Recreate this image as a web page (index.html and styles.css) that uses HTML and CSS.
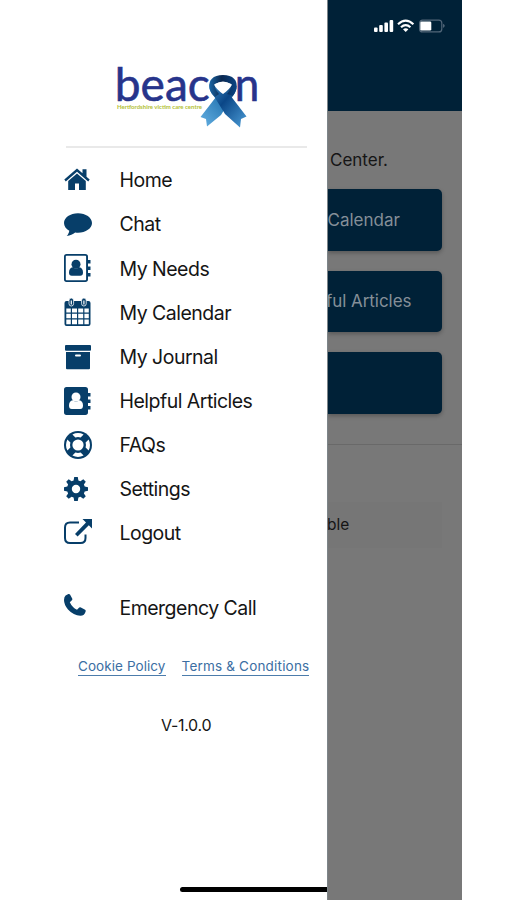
FILE: index.html
```html
<!DOCTYPE html>
<html lang="en">
<head>
<meta charset="utf-8">
<title>Beacon menu</title>
<link rel="stylesheet" href="styles.css">
</head>
<body>
<div class="screen">
  <aside class="drawer">
    <header class="brand">
      <svg class="logo" viewBox="113 63 150 66" role="img" aria-label="beacon">
        <defs>
          <linearGradient id="tailA" x1="1" y1="0" x2="0" y2="1"><stop offset="0" stop-color="#0c3b72"/><stop offset=".45" stop-color="#2f7fba"/><stop offset="1" stop-color="#65b0e2"/></linearGradient>
          <linearGradient id="tailB" x1="0" y1="0" x2="1" y2="1"><stop offset="0" stop-color="#3c8cc6"/><stop offset=".4" stop-color="#0a4687"/><stop offset="1" stop-color="#4d9ed8"/></linearGradient>
          <linearGradient id="loop" x1="0" x2="1"><stop offset="0" stop-color="#1c67a5"/><stop offset=".45" stop-color="#0a2850"/><stop offset="1" stop-color="#0b4585"/></linearGradient>
        </defs>
        <text class="logo-word" x="114.800" y="101.300" textLength="95" lengthAdjust="spacingAndGlyphs">beac</text>
        <text class="logo-word" x="234.700" y="101.300" textLength="24.500" lengthAdjust="spacingAndGlyphs">n</text>
        <text class="logo-tag" x="117" y="109.300" textLength="85" lengthAdjust="spacingAndGlyphs">Hertfordshire victim care centre</text>
        <path fill="url(#tailA)" d="M236.500 86q0 6-5 12L221 115 207 126.500 206 119 200.500 117 216 97 229 86Z"/>
        <path fill="url(#tailB)" d="M209.500 84q-1 7 5 13L225 114 240 127.500 241 119 246.500 116.500 230 95 216 86Z"/>
        <path fill="url(#loop)" d="M209.500 89C208 80 213 75 223 75c10 0 15 5 13.500 14q-1 4-4 7L227 94Q232 88 231 84 223 79 215 84 214 88 219 94L215 97Q210.500 93 209.500 89Z"/>
        <path fill="#fff" d="M214 84.500Q223 79.500 232 84.500 230 89 223 94 216 89 214 84.500Z"/>
      </svg>
    </header>
    <nav class="menu">
      <a class="item"><svg class="icon" viewBox="0 0 28 28"><path d="M13 2.500 0.300 13.600l1.500 1.800L13 5.800l11.200 9.600 1.500-1.800-3.200-2.800V3.300h-4v4Z"/><path d="m13 7.400-8.800 7.500V24H11v-6.500h4V24h6.800v-9.100Z"/></svg><span>Home</span></a>
      <a class="item"><svg class="icon" viewBox="0 0 28 28"><path d="M14 3.200C6.300 3.200 0 7.500 0 13c0 3.200 2.100 6 5.300 7.700-.3 2-1.200 3.800-2.600 5.400 3.400-.5 6.200-2 8.500-3.600 9 1.200 16.800-3.500 16.800-9.500 0-5.500-6.300-9.800-14-9.800Z"/></svg><span>Chat</span></a>
      <a class="item"><svg class="icon" viewBox="0 0 28 28"><path fill-rule="evenodd" d="M2.500 0h18.800q2.700 0 2.700 2.700v22.600q0 2.700-2.700 2.700H2.500Q0 28 0 25.300V2.700Q0 0 2.500 0Zm0 1.800q-.7 0-.7.800v22.800q0 .8.700.8h18.800q.8 0 .8-.8V2.600q0-.8-.8-.8Z"/><path d="M24 6h2.500v3.600H24Zm0 6.500h2.500v3.600H24Zm0 6.500h2.500v3.600H24Z"/><circle cx="12" cy="10.300" r="4.500"/><path d="M8.800 13.300Q5 14 5 18.500q0 3.200 2.800 3.200h8.400q2.800 0 2.800-3.200 0-4.500-3.800-5.200-3.200 2.600-6.400 0Z"/></svg><span>My Needs</span></a>
      <a class="item"><svg class="icon" viewBox="0 0 28 28"><path fill-rule="evenodd" d="M2.500 3h22q2 0 2 2v21q0 2-2 2h-22q-2 0-2-2V5q0-2 2-2ZM2.300 10.600v4h4.500v-4Zm5.700 0v4h5v-4Zm6.200 0v4h5v-4Zm6.200 0v4h4.400v-4ZM2.300 15.800v4.400h4.500v-4.400Zm5.700 0v4.400h5v-4.400Zm6.200 0v4.400h5v-4.400Zm6.200 0v4.400h4.400v-4.400ZM2.300 21.400v4.800h4.500v-4.800Zm5.700 0v4.800h5v-4.800Zm6.200 0v4.800h5v-4.800Zm6.200 0v4.800h4.400v-4.800Z"/><g class="ring"><rect x="5" y="0" width="4.600" height="8" rx="2.300"/><rect x="17.600" y="0" width="4.600" height="8" rx="2.300"/></g><path fill="#fff" d="M6.700 2.500h1.200v4H6.700Zm12.600 0h1.200v4h-1.200Z"/></svg><span>My Calendar</span></a>
      <a class="item"><svg class="icon" viewBox="0 0 28 28"><rect x="1" y="2" width="26" height="5.800" rx="1"/><path fill-rule="evenodd" d="M2 9h24v16.200q0 1-1 1H3q-1 0-1-1Zm10 2.400q-1 0-1 1.100t1 1.100h4q1 0 1-1.100t-1-1.100Z"/></svg><span>My Journal</span></a>
      <a class="item"><svg class="icon" viewBox="0 0 28 28"><path d="M2.500 0h18.800q2.700 0 2.700 2.700v22.600q0 2.700-2.700 2.700H2.500Q0 28 0 25.300V2.700Q0 0 2.500 0ZM24 6h2.500v3.600H24Zm0 6.500h2.500v3.600H24Zm0 6.500h2.500v3.600H24Z"/><g fill="#fff"><circle cx="12" cy="10" r="4.500"/><path d="M8.800 13.300Q5 14 5 18.500q0 3.500 2.800 3.500h8.400q2.800 0 2.800-3.500 0-4.500-3.800-5.200-3.200 2.600-6.400 0Z"/></g></svg><span>Helpful Articles</span></a>
      <a class="item"><svg class="icon" viewBox="0 0 28 28"><circle cx="14" cy="14" r="14"/><g fill="#fff"><circle cx="14" cy="14" r="5.600"/><path d="M8.400 3.400Q14 .6 19.600 3.400L16.600 6.400Q14 5.600 11.400 6.400ZM8.400 24.600Q14 27.400 19.600 24.600L16.600 21.600Q14 22.400 11.400 21.600ZM3.400 8.400Q.6 14 3.400 19.600L6.400 16.600Q5.600 14 6.400 11.400ZM24.600 8.400Q27.400 14 24.600 19.600L21.600 16.600Q22.400 14 21.600 11.400Z"/></g></svg><span>FAQs</span></a>
      <a class="item"><svg class="icon" viewBox="0 0 28 28"><path fill-rule="evenodd" d="M10.200 2h3.600l.6 3.400 2 .8 2.900-2 2.500 2.600-1.900 2.800.8 2 3.300.6v3.600l-3.300.6-.8 2 1.900 2.800-2.500 2.600-2.900-2-2 .8-.6 3.400h-3.600l-.6-3.400-2-.8-2.900 2-2.500-2.600 1.900-2.800-.8-2-3.300-.6v-3.600l3.300-.6.800-2-1.900-2.800 2.500-2.600 2.900 2 2-.8ZM12 9.800a4.200 4.200 0 1 0 0 8.400 4.200 4.200 0 0 0 0-8.400Z"/></svg><span>Settings</span></a>
      <a class="item"><svg class="icon" viewBox="0 0 28 28"><path class="line" d="M15 3.500H6Q1 3.500 1 8.500v10.500q0 5 5 5h10.500q5 0 5-5V15.500"/><path d="M18.500 0H28v9.500l-3.200-3.200L13.600 17.500 11 14.900 22 3.600Z"/></svg><span>Logout</span></a>
      <a class="item emergency"><svg class="icon" viewBox="0 0 28 28"><path d="M1.600 2.600 4.400 1.100q1-.4 1.600.5l2.200 4q.5.900-.3 1.700L5.800 9.200q2.300 5 7.200 7.600l2.200-2.200q.8-.7 1.700-.2l4.200 2.400q.9.500.6 1.500-1.200 4.500-5.300 4.500Q9.500 22.500 4 16.500 0 11.700 0 7 .1 3.700 1.600 2.600Z"/></svg><span>Emergency Call</span></a>
    </nav>
    <div class="legal"><a class="cookie">Cookie Policy</a><a class="terms">Terms &amp; Conditions</a></div>
    <p class="version">V-1.0.0</p>
    <div class="home-bar"></div>
  </aside>
  <main class="page">
    <header class="topbar">
      <svg class="status" viewBox="0 0 72 14">
        <g fill="#fff"><rect x="0" y="8.500" width="3.600" height="4.500" rx="1"/><rect x="5.200" y="6" width="3.600" height="7" rx="1"/><rect x="10.400" y="3.500" width="3.600" height="9.500" rx="1"/><rect x="15.600" y="1" width="3.600" height="12" rx="1"/></g>
        <g fill="none" stroke="#fff" stroke-width="2.200"><path d="M24 5.200Q31.700-1.800 39.400 5.200M27 8.300Q31.700 4 36.400 8.300"/></g><path fill="#fff" d="M29 10.300Q31.700 8.300 34.400 10.300L31.700 13Z"/>
        <rect x="45.600" y="1.100" width="22.200" height="11.800" rx="3" fill="none" stroke="#526779" stroke-width="1.200"/><rect x="46.300" y="2.500" width="11" height="9" rx="1.300" fill="#fff"/><path d="M69.300 4.800Q71.800 6.800 69.300 9Z" fill="#718292"/>
      </svg>
    </header>
    <p class="intro">Center.</p>
    <div class="tiles">
      <div class="tile tile-calendar">Calendar</div>
      <div class="tile tile-articles">ful Articles</div>
      <div class="tile"></div>
    </div>
    <section class="notice"><p class="notice-card">ble</p></section>
  </main>
</div>
</body>
</html>
```

FILE: styles.css
```css
* { box-sizing: border-box; }
body { margin: 0; background: #fff; color: #151515; font-family: Inter, "Liberation Sans", sans-serif; }
p { margin: 0; }
.screen { display: flex; width: 462px; height: 900px; overflow: hidden; }
.drawer { display: flex; flex-direction: column; flex: none; width: 327px; padding-bottom: 8px; background: #fff; }
.brand { height: 148px; margin: 0 20px 0 66px; padding: 63px 0 0 47px; border-bottom: 2px solid #e9e9e9; }
.logo { display: block; width: 150px; height: 66px; overflow: visible; }
.logo-word { font-family: Lato, sans-serif; font-size: 46px; fill: #27348b; stroke: #27348b; stroke-width: .6px; }
.logo-tag { font-family: Lato, sans-serif; font-size: 5.500px; font-weight: 700; fill: #b3bf35; }
.menu { display: flex; flex-direction: column; padding: 10px 0 0 64px; }
.item { display: flex; align-items: center; height: 44.150px; font-size: 19.500px; letter-spacing: -.52px; }
.item span { padding-top: .5px; white-space: nowrap; }
.icon { flex: none; width: 28px; height: 28px; margin-right: 27.500px; fill: #073e69; overflow: visible; }
.line { fill: none; stroke: #073e69; stroke-width: 2px; }
.ring { stroke: #fff; stroke-width: .8px; }
.emergency { margin-top: 30px; }
.legal { display: flex; gap: 16px; margin-top: 28.500px; padding-left: 78px; font-size: 13.500px; line-height: 17px; color: #3b6ea3; white-space: nowrap; }
.legal a { height: 18px; border-bottom: 1px solid #4c7cab; }
.cookie { letter-spacing: .07px; }
.terms { letter-spacing: .19px; }
.version { margin-top: 39px; padding-left: 161px; font-size: 16px; line-height: 20px; letter-spacing: -.3px; }
.home-bar { width: 147px; height: 5px; margin: auto 0 0 auto; border-radius: 3px 0 0 3px; background: #000; }
.page { flex: 1; min-width: 0; overflow: hidden; background: #787878; border-left: 1px solid #7d8589; }
.topbar { height: 111px; padding: 19px 0 0 46px; background: #002137; }
.status { display: block; width: 72px; height: 14px; }
.intro { height: 78px; padding: 38px 0 0 2px; font-size: 17px; line-height: 22px; }
.tiles { display: flex; flex-direction: column; gap: 20px; height: 256px; border-bottom: 1px solid #696969; }
.tile { display: flex; align-items: center; width: 114px; height: 61.500px; border-radius: 0 5px 5px 0; background: #002137; box-shadow: 0 2px 4px #0004; color: #858f98; font-size: 17px; white-space: nowrap; }
.tile-calendar { text-indent: -.5px; }
.tile-articles { text-indent: -2px; letter-spacing: -.05px; }
.notice { padding: 57px 20px 0 0; }
.notice-card { height: 46px; background: #767676; font-size: 15.500px; line-height: 46px; text-indent: -1px; }
```
